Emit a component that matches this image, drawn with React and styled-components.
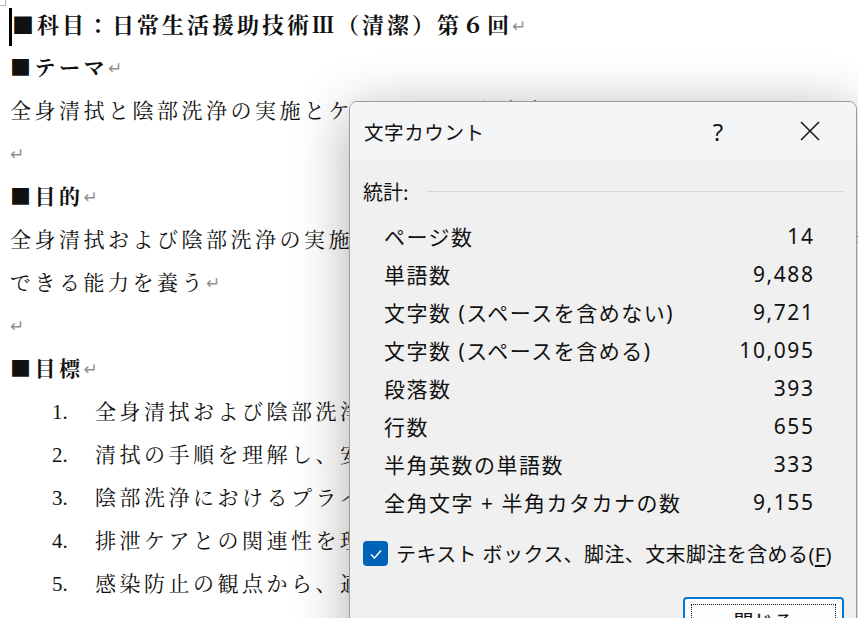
import React from 'react'
import styled, { createGlobalStyle } from 'styled-components'

const GlobalStyle = createGlobalStyle`
  html, body {
    margin: 0;
    padding: 0;
    background: #ffffff;
  }
`

const docLines = [
  { text: '■テーマ', bold: true },
  { text: '全身清拭と陰部洗浄の実施とケアにおける留意点' },
  { text: '' },
  { text: '■目的', bold: true },
  { text: '全身清拭および陰部洗浄の実施を通して、対象者の尊厳に配慮した清潔援助が', noMark: true },
  { text: 'できる能力を養う' },
  { text: '' },
  { text: '■目標', bold: true },
]

const goals = [
  '全身清拭および陰部洗浄の目的と効果を説明できる',
  '清拭の手順を理解し、安全に実施できる',
  '陰部洗浄におけるプライバシーへの配慮ができる',
  '排泄ケアとの関連性を理解し、観察できる',
  '感染防止の観点から、適切な物品の取り扱いができる',
]

const stats = [
  ['ページ数', '14'],
  ['単語数', '9,488'],
  ['文字数 (スペースを含めない)', '9,721'],
  ['文字数 (スペースを含める)', '10,095'],
  ['段落数', '393'],
  ['行数', '655'],
  ['半角英数の単語数', '333'],
  ['全角文字 + 半角カタカナの数', '9,155'],
]

const App = () => {
  return (
    <Page>
      <GlobalStyle />
      <CornerMark />
      <Doc>
        <Heading>
          <Caret />
          ■科目：日常生活援助技術Ⅲ（清潔）第６回<Mark>↵</Mark>
        </Heading>
        {docLines.map((l, i) => (
          <Line key={i} $bold={l.bold}>
            {l.text}
            {!l.noMark && <Mark>↵</Mark>}
          </Line>
        ))}
        {goals.map((g, i) => (
          <ListItem key={i}>
            <Num>{i + 1}.</Num>
            {g}
          </ListItem>
        ))}
      </Doc>

      <Window>
        <TitleBar>
          <Title>文字カウント</Title>
          <TitleButton>?</TitleButton>
          <TitleButton>
            <svg width="20" height="20" viewBox="0 0 20 20">
              <path d="M1 1 L19 19 M19 1 L1 19" stroke="#1b1b1b" strokeWidth="1.6" fill="none" />
            </svg>
          </TitleButton>
        </TitleBar>
        <Body>
          <Group>
            <GroupLabel>統計:</GroupLabel>
            <Rule />
          </Group>
          <StatList>
            {stats.map(([label, value]) => (
              <StatRow key={label}>
                <StatLabel>{label}</StatLabel>
                <StatValue>{value}</StatValue>
              </StatRow>
            ))}
          </StatList>
          <CheckRow>
            <CheckBox>
              <svg width="14" height="14" viewBox="0 0 14 14">
                <path d="M2 7.5 L5.5 11 L12 3.5" stroke="#ffffff" strokeWidth="1.5" fill="none" />
              </svg>
            </CheckBox>
            <CheckLabel>
              テキスト ボックス、脚注、文末脚注を含める(<u>F</u>)
            </CheckLabel>
          </CheckRow>
          <Footer>
            <CloseButton>
              <FocusRing>閉じる</FocusRing>
            </CloseButton>
          </Footer>
        </Body>
      </Window>
    </Page>
  )
}

export default App

const Page = styled.div`
  position: relative;
  width: 858px;
  height: 618px;
  overflow: hidden;
  background: #ffffff;
`

const CornerMark = styled.div`
  position: absolute;
  left: 0;
  top: 0;
  width: 5px;
  height: 5px;
  border-right: 1px solid #b8b8b8;
  border-bottom: 1px solid #b8b8b8;
`

const Doc = styled.div`
  padding: 3px 0 0 10px;
  font-family: "Noto Serif CJK JP", "Noto Sans CJK JP", serif;
  color: #111111;
`

const Line = styled.div`
  height: 43px;
  line-height: 43px;
  white-space: nowrap;
  font-size: 21px;
  letter-spacing: 3.5px;
  font-weight: ${(p) => (p.$bold ? 700 : 400)};
`

const Heading = styled(Line)`
  margin-left: -1px;
  font-size: 22px;
  letter-spacing: 3px;
  font-weight: 700;
  line-height: 42px;
  height: 42px;
`

const Caret = styled.span`
  display: inline-block;
  width: 3px;
  height: 38px;
  vertical-align: middle;
  background: #000000;
`

const Mark = styled.span`
  font-family: "DejaVu Sans", sans-serif;
  font-weight: 400;
  font-size: 17px;
  letter-spacing: 0;
  color: #8f8f8f;
  vertical-align: 1px;
`

const ListItem = styled(Line)`
  padding-left: 42px;
`

const Num = styled.span`
  display: inline-block;
  width: 43px;
  letter-spacing: 0;
  font-family: "Liberation Serif", serif;
`

const Window = styled.div`
  position: absolute;
  left: 349px;
  top: 101px;
  width: 506px;
  height: 560px;
  border: 1px solid #9c9c9c;
  border-radius: 8px;
  background: #f0f0f0;
  overflow: hidden;
  box-shadow: 0 10px 55px rgba(0, 0, 0, 0.32);
  font-family: "Noto Sans", "Noto Sans CJK JP", sans-serif;
  color: #111111;
`

const TitleBar = styled.div`
  display: flex;
  align-items: center;
  height: 58px;
  padding-left: 14px;
  background: #f3f5f7;
`

const Title = styled.div`
  flex: 1;
  font-family: "Noto Sans CJK JP", sans-serif;
  font-size: 19.5px;
  letter-spacing: 0.6px;
`

const TitleButton = styled.div`
  width: 92px;
  height: 58px;
  display: flex;
  align-items: center;
  justify-content: center;
  font-family: "Noto Sans", sans-serif;
  font-size: 24px;
  color: #1b1b1b;
`

const Body = styled.div`
  padding: 14px 12px 0 13px;
`

const Group = styled.div`
  display: flex;
  align-items: center;
  gap: 18px;
  height: 34px;
`

const GroupLabel = styled.div`
  font-family: "Noto Sans CJK JP", sans-serif;
  font-size: 20px;
`

const Rule = styled.div`
  flex: 1;
  height: 1px;
  background: #d6d6d6;
`

const StatList = styled.div`
  margin-top: 9px;
  padding: 0 31px 0 21px;
`

const StatRow = styled.div`
  display: flex;
  justify-content: space-between;
  align-items: center;
  height: 38px;
`

const StatLabel = styled.div`
  font-size: 21px;
  letter-spacing: 1.5px;
  white-space: nowrap;
`

const StatValue = styled.div`
  font-size: 21px;
  letter-spacing: 1.6px;
  margin-right: -1.6px;
`

const CheckRow = styled.div`
  display: flex;
  align-items: center;
  gap: 8px;
  margin-top: 18px;
`

const CheckBox = styled.div`
  width: 25px;
  height: 25px;
  border-radius: 4px;
  background: #0063b8;
  display: flex;
  align-items: center;
  justify-content: center;
`

const CheckLabel = styled.div`
  font-size: 20px;
  letter-spacing: 0.4px;
  white-space: nowrap;

  u {
    text-underline-offset: 3px;
  }
`

const Footer = styled.div`
  display: flex;
  justify-content: flex-end;
  margin-top: 29px;
`

const CloseButton = styled.div`
  width: 161px;
  height: 38px;
  box-sizing: border-box;
  border: 2px solid #0078d4;
  border-radius: 4px;
  background: #fdfdfd;
  padding: 5px 6px;
`

const FocusRing = styled.div`
  height: 100%;
  box-sizing: border-box;
  border: 1px dotted #111111;
  display: flex;
  align-items: flex-start;
  justify-content: center;
  padding-top: 4px;
  line-height: 26px;
  font-family: "Noto Sans CJK JP", sans-serif;
  font-size: 20px;
`
